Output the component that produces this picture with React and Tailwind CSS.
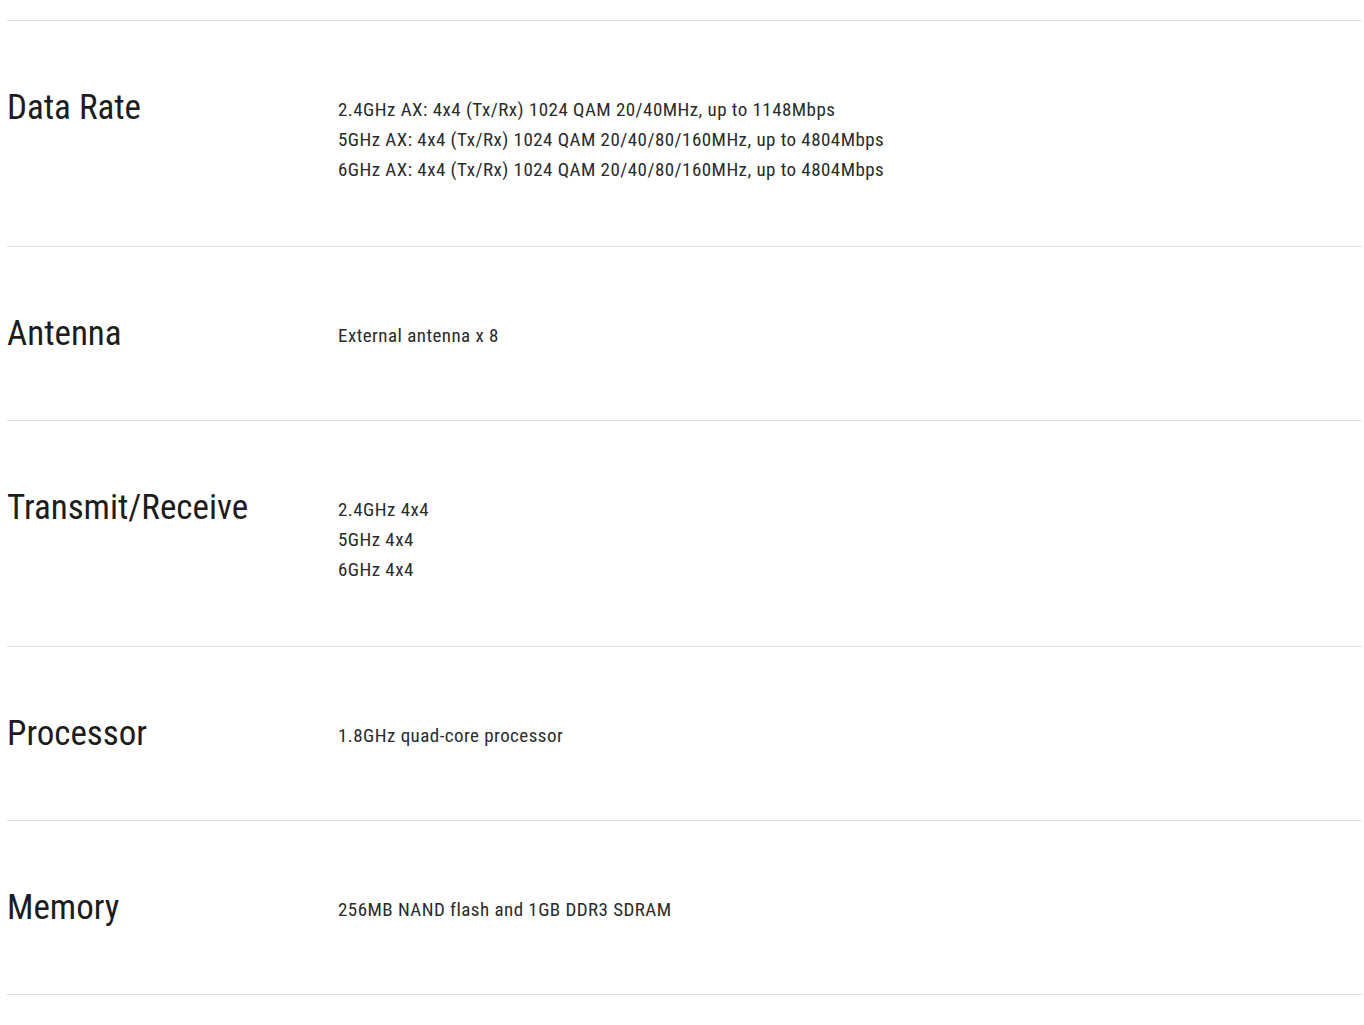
import React from "react";

const specs = [
  {
    label: "Data Rate",
    values: [
      "2.4GHz AX: 4x4 (Tx/Rx) 1024 QAM 20/40MHz, up to 1148Mbps",
      "5GHz AX: 4x4 (Tx/Rx) 1024 QAM 20/40/80/160MHz, up to 4804Mbps",
      "6GHz AX: 4x4 (Tx/Rx) 1024 QAM 20/40/80/160MHz, up to 4804Mbps",
    ],
  },
  { label: "Antenna", values: ["External antenna x 8"] },
  { label: "Transmit/Receive", values: ["2.4GHz 4x4", "5GHz 4x4", "6GHz 4x4"] },
  { label: "Processor", values: ["1.8GHz quad-core processor"] },
  { label: "Memory", values: ["256MB NAND flash and 1GB DDR3 SDRAM"] },
];

const App = () => {
  return (
    <div
      className="min-h-screen bg-white pt-5"
      style={{ fontFamily: '"Roboto Condensed", Roboto, sans-serif' }}
    >
      <div className="ml-[7px] w-[1355px] border-t border-[#e0e0e0]">
        {specs.map((spec) => (
          <div key={spec.label} className="flex items-start border-b border-[#e0e0e0] pt-[62px] pb-[61px]">
            {/* Label */}
            <div className="w-[331px] shrink-0 text-[35px] leading-[50px] text-[#1c1c1c]">
              {spec.label}
            </div>
            {/* Values */}
            <div className="mt-[12px] text-[19px] leading-[30px] tracking-[0.45px] text-[#2b2b2b]">
              {spec.values.map((v) => (
                <div key={v}>{v}</div>
              ))}
            </div>
          </div>
        ))}
      </div>
    </div>
  );
};

export default App;
